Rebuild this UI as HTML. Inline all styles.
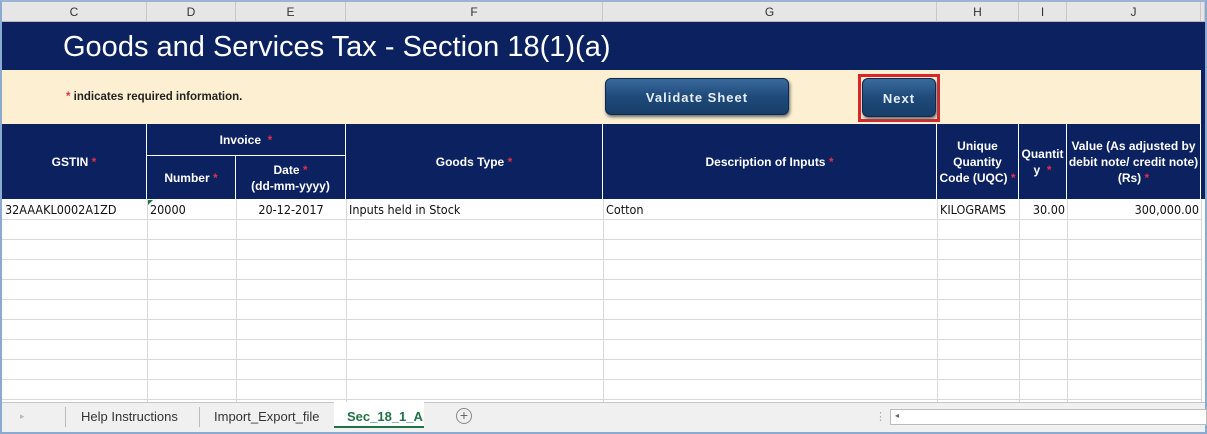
<!DOCTYPE html><html><head><style>
*{margin:0;padding:0;box-sizing:border-box}
body{width:1207px;height:434px;overflow:hidden;background:#fff;font-family:"Liberation Sans",Arial,sans-serif;position:relative}
.a{position:absolute}
.ch{top:2px;height:20px;background:#e6e6e6;border-right:1px solid #c8c8c8;border-bottom:1px solid #b8b8b8;font-size:12px;color:#333;text-align:center;line-height:20px}
.hd{background:#0b2160;color:#fff;font-weight:bold;font-size:12px;font-family:"Liberation Sans Narrow","Liberation Sans",sans-serif;display:flex;align-items:center;justify-content:center;text-align:center;border-right:1px solid #fff;line-height:16px}
.r{color:#e0304a}
.vl{top:199px;height:203px;width:1px;background:#d9d9d9}
.hl{left:2px;width:1200px;height:1px;background:#d9d9d9}
.c{top:200px;height:20px;font-family:"DejaVu Sans Condensed","Liberation Sans Narrow",sans-serif;font-size:12.5px;line-height:20px;color:#111}
.btn{background:linear-gradient(#3a6a9c,#1e4a7a 50%,#173e69);border-radius:6px;color:#e8eef6;font-weight:bold;font-size:13px;letter-spacing:1px;text-align:center;box-shadow:1px 2px 3px #666;border:1px solid #0d2a4c}
</style></head><body>
<div class="a" style="left:0;top:0;width:1207px;height:434px;border:2px solid #8aaad0;border-top:2px solid #9ab4d6"></div>
<div class="a ch" style="left:2px;width:145px">C</div>
<div class="a ch" style="left:147px;width:89px">D</div>
<div class="a ch" style="left:236px;width:110px">E</div>
<div class="a ch" style="left:346px;width:257px">F</div>
<div class="a ch" style="left:603px;width:334px">G</div>
<div class="a ch" style="left:937px;width:82px">H</div>
<div class="a ch" style="left:1019px;width:48px">I</div>
<div class="a ch" style="left:1067px;width:134px">J</div>
<div class="a ch" style="left:1201px;width:4px"></div>
<div class="a" style="left:2px;top:22px;width:1203px;height:48px;background:#0b2160;color:#fff;font-size:29px;line-height:50px;padding-left:61px">Goods and Services Tax - Section 18(1)(a)</div>
<div class="a" style="left:2px;top:70px;width:1203px;height:54px;background:#fdf0d2"></div>
<div class="a" style="left:66px;top:91px;font-size:11.5px;font-weight:bold;color:#222;font-family:'Liberation Sans Narrow','Liberation Sans',sans-serif"><span class="r">*</span> indicates required information.</div>
<div class="a btn" style="left:605px;top:78px;width:184px;height:37px;line-height:37px">Validate Sheet</div>
<div class="a" style="left:858px;top:74px;width:82px;height:48px;border:3px solid #d8262b"></div>
<div class="a btn" style="left:862px;top:78px;width:74px;height:39px;line-height:39px">Next</div>
<div class="a hd" style="left:2px;top:124px;width:145px;height:75px"><div>GSTIN&nbsp;<span class="r">*</span></div></div>
<div class="a hd" style="left:147px;top:124px;width:199px;height:32px;border-bottom:1px solid #fff"><div>Invoice&nbsp;&nbsp;<span class="r">*</span></div></div>
<div class="a hd" style="left:147px;top:156px;width:89px;height:43px"><div>Number&nbsp;<span class="r">*</span></div></div>
<div class="a hd" style="left:236px;top:156px;width:110px;height:43px"><div>Date <span class="r">*</span><br>(dd-mm-yyyy)</div></div>
<div class="a hd" style="left:346px;top:124px;width:257px;height:75px"><div>Goods Type&nbsp;<span class="r">*</span></div></div>
<div class="a hd" style="left:603px;top:124px;width:334px;height:75px"><div>Description of Inputs&nbsp;<span class="r">*</span></div></div>
<div class="a hd" style="left:937px;top:124px;width:82px;height:75px"><div>Unique<br>Quantity<br>Code (UQC) <span class="r">*</span></div></div>
<div class="a hd" style="left:1019px;top:124px;width:48px;height:75px"><div>Quantit<br>y&nbsp;&nbsp;<span class="r">*</span></div></div>
<div class="a hd" style="left:1067px;top:124px;width:134px;height:75px"><div>Value (As adjusted by<br>debit note/ credit note)<br>(Rs) <span class="r">*</span></div></div>
<div class="a" style="left:1201px;top:22px;width:4px;height:177px;background:#0b2160"></div>
<div class="a vl" style="left:147px"></div><div class="a vl" style="left:236px"></div><div class="a vl" style="left:346px"></div><div class="a vl" style="left:603px"></div><div class="a vl" style="left:937px"></div><div class="a vl" style="left:1019px"></div><div class="a vl" style="left:1067px"></div><div class="a vl" style="left:1201px"></div>
<div class="a hl" style="top:219px"></div><div class="a hl" style="top:239px"></div><div class="a hl" style="top:259px"></div><div class="a hl" style="top:279px"></div><div class="a hl" style="top:299px"></div><div class="a hl" style="top:319px"></div><div class="a hl" style="top:339px"></div><div class="a hl" style="top:359px"></div><div class="a hl" style="top:379px"></div><div class="a hl" style="top:399px"></div>
<div class="a c" style="left:5px">32AAAKL0002A1ZD</div>
<div class="a" style="left:148px;top:200px;width:0;height:0;border-top:5px solid #217a3a;border-right:5px solid transparent"></div>
<div class="a c" style="left:150px">20000</div>
<div class="a c" style="left:236px;width:110px;text-align:center">20-12-2017</div>
<div class="a c" style="left:349px">Inputs held in Stock</div>
<div class="a c" style="left:606px">Cotton</div>
<div class="a c" style="left:940px">KILOGRAMS</div>
<div class="a c" style="left:1019px;width:46px;text-align:right">30.00</div>
<div class="a c" style="left:1067px;width:132px;text-align:right">300,000.00</div>
<div class="a" style="left:2px;top:402px;width:1203px;height:30px;background:#f0f0f0;border-top:1px solid #c6c6c6"></div>
<div class="a" style="left:20px;top:411px;font-size:9px;color:#bbb">▸</div>
<div class="a" style="left:65px;top:407px;width:1px;height:20px;background:#bbb"></div>
<div class="a" style="left:81px;top:409px;font-size:13px;color:#333;font-family:'Liberation Sans Narrow',sans-serif">Help Instructions</div>
<div class="a" style="left:199px;top:407px;width:1px;height:20px;background:#bbb"></div>
<div class="a" style="left:214px;top:409px;font-size:13px;color:#333;font-family:'Liberation Sans Narrow',sans-serif">Import_Export_file</div>
<div class="a" style="left:334px;top:402px;width:90px;height:26px;background:#fff;border-bottom:2px solid #217346"></div>
<div class="a" style="left:347px;top:409px;font-size:13px;font-weight:bold;color:#217346;font-family:'Liberation Sans Narrow',sans-serif">Sec_18_1_A</div>
<div class="a" style="left:456px;top:408px;width:16px;height:16px;border:1px solid #888;border-radius:50%;text-align:center;line-height:13px;font-size:14px;color:#666">+</div>
<div class="a" style="left:875px;top:410px;font-size:11px;color:#aaa">⋮</div>
<div class="a" style="left:890px;top:409px;width:317px;height:16px;background:#fff;border:1px solid #bbb"></div>
<div class="a" style="left:895px;top:411px;font-size:8px;color:#666">◂</div>
</body></html>
